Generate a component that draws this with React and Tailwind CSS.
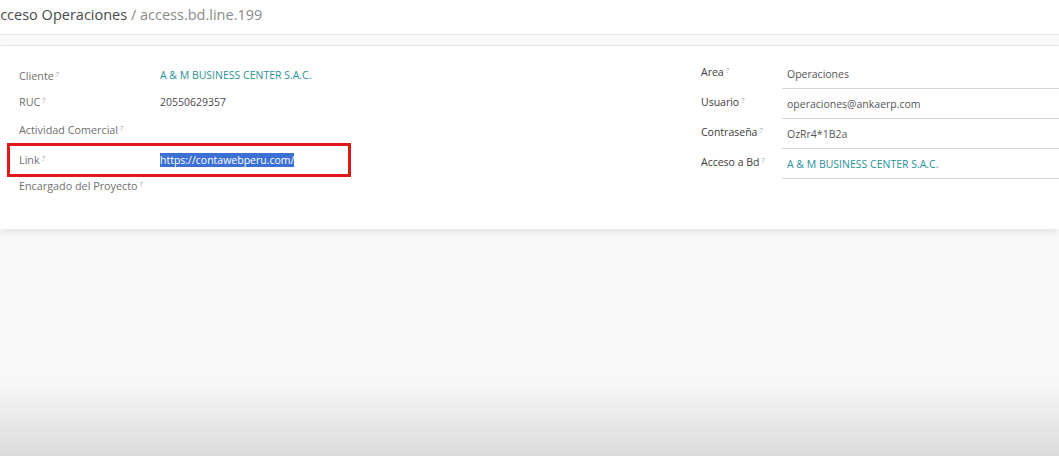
import React from "react";

const font = { fontFamily: '"Open Sans", "Noto Sans", sans-serif' };

function Q() {
  return <sup className="ml-[2px] text-[7.5px] text-[#9aa0a6] relative -top-[3px]">?</sup>;
}

function LeftRow({ label, children, h }) {
  return (
    <div className={`flex items-center ${h}`}>
      <div className="w-[160px] pl-[19px] text-[10.8px] text-[#6f6f6f]">
        {label}
        <Q />
      </div>
      <div className="text-[10.5px] text-[#4a4a4a]">{children}</div>
    </div>
  );
}

function RightRow({ label, children }) {
  return (
    <div className="flex items-center h-[30px]">
      <div className="w-[81px] text-[10.5px] text-[#3a3a3a] pb-[3px]">
        {label}
        <Q />
      </div>
      <div className="flex-1 h-full flex items-center pl-[5px] pt-[3px] border-b border-[#d6d6d6] text-[10.5px] text-[#555]">
        {children}
      </div>
    </div>
  );
}

export default function App() {
  return (
    <div className="h-[456px] w-[1059px] flex flex-col overflow-hidden bg-[#f8f8f9]" style={font}>
      {/* Breadcrumb bar */}
      <div className="h-[35px] bg-white border-b border-[#e4e4e4] flex items-center">
        <div className="-ml-[9px] text-[14.5px] text-[#4a4a4a] pb-[4px]">
          Acceso Operaciones <span className="text-[#8a8a8a]">/ access.bd.line.199</span>
        </div>
      </div>
      <div className="h-[11px] bg-[#f9f9f9] border-b border-[#e6e6e6]" />

      {/* Form sheet */}
      <div className="h-[183px] bg-white shadow-[0_3px_6px_rgba(0,0,0,0.08)] flex">
        <div className="w-[680px] pt-[19px]">
          <LeftRow label="Cliente" h="h-[22px]">
            <span className="text-[#2b8f98]">A &amp; M BUSINESS CENTER S.A.C.</span>
          </LeftRow>
          <LeftRow label="RUC" h="h-[31px]">20550629357</LeftRow>
          <LeftRow label="Actividad Comercial" h="h-[25px]" />
          <div className="ml-[7px] w-[344px] h-[34px] border-[3px] border-[#e0191b] flex items-center">
            <div className="w-[150px] pl-[9px] text-[10.8px] text-[#6f6f6f]">
              Link
              <Q />
            </div>
            <span className="text-[10.5px] leading-[14px] bg-[#3b6fd4] text-white">https://contawebperu.com/</span>
          </div>
          <LeftRow label="Encargado del Proyecto" h="h-[18px]" />
        </div>
        <div className="flex-1 pt-[59px] -mt-[46px] ml-[21px]">
          <RightRow label="Area">Operaciones</RightRow>
          <RightRow label="Usuario">operaciones@ankaerp.com</RightRow>
          <RightRow label="Contraseña">OzRr4*1B2a</RightRow>
          <RightRow label="Acceso a Bd">
            <span className="text-[#2b8f98]">A &amp; M BUSINESS CENTER S.A.C.</span>
          </RightRow>
        </div>
      </div>

      <div className="flex-1 flex flex-col">
        <div className="h-[150px]" />
        <div className="flex-1 bg-gradient-to-b from-[#f8f8f9] to-[#dcdcdc]" />
      </div>
    </div>
  );
}
